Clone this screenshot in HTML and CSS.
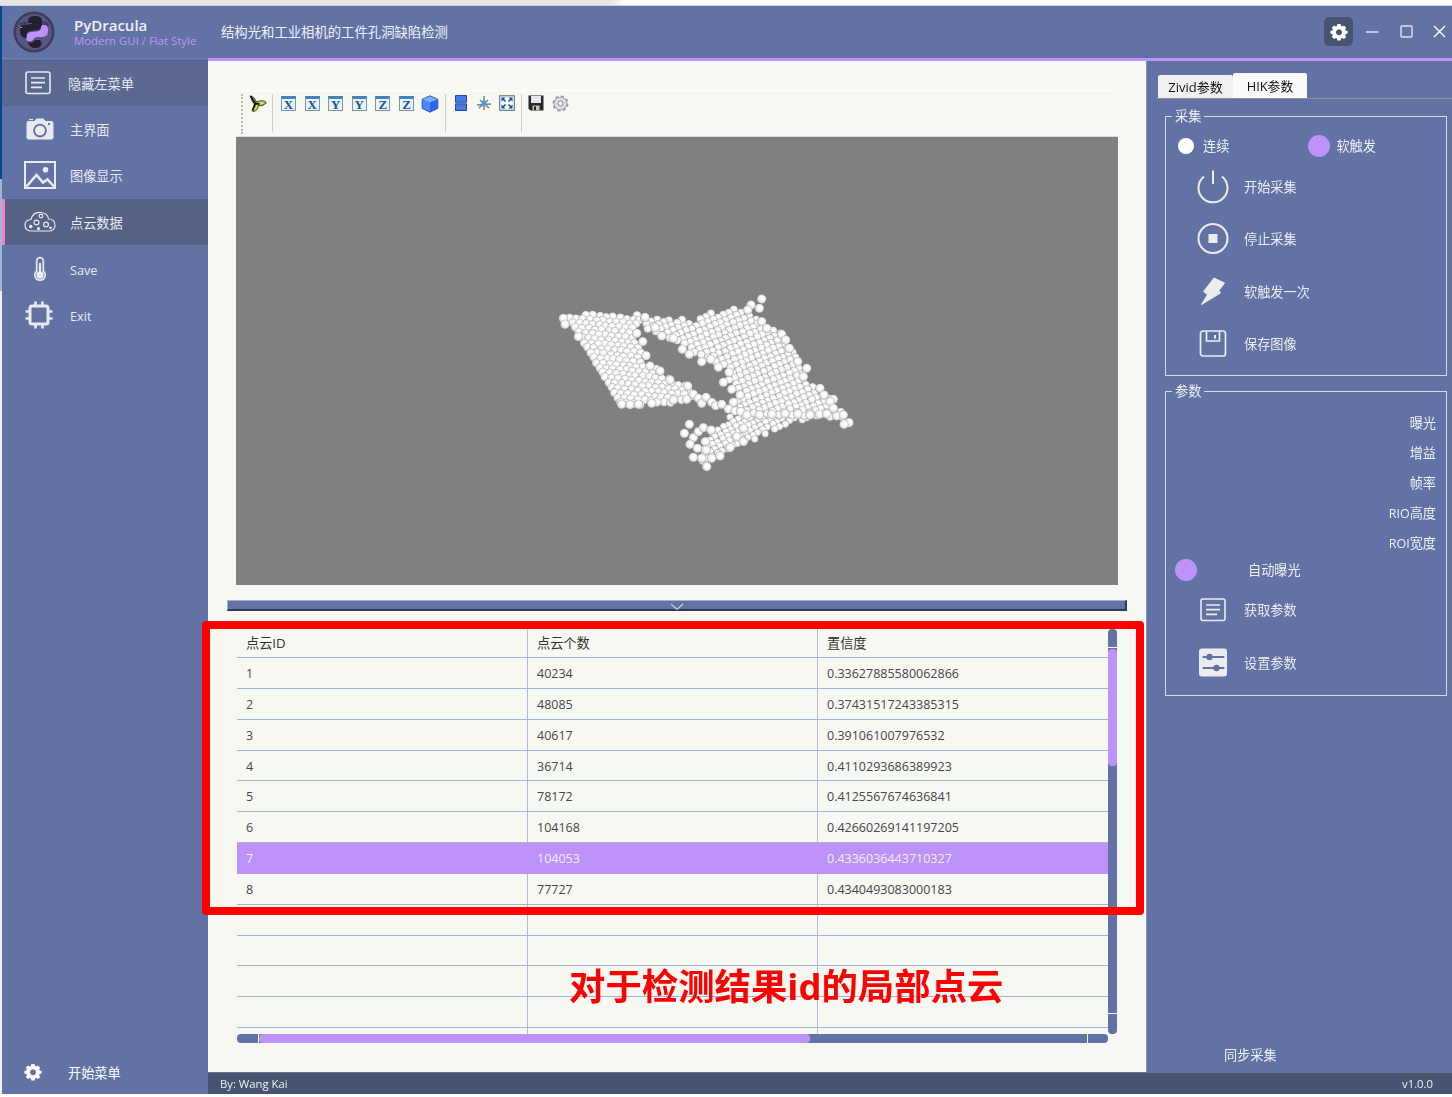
FILE: index.html
```html
<!DOCTYPE html>
<html lang="zh-CN">
<head>
<meta charset="utf-8">
<title>PyDracula</title>
<link rel="stylesheet" href="styles.css">
</head>
<body>
<svg class="defs" aria-hidden="true">
  <symbol id="list" viewBox="0 0 26 24"><rect x="1" y="1" width="24" height="21.5" rx="2" fill="none" stroke="currentColor" stroke-width="1.6"/><path d="M6 7h14M6 11.7h14M6 16.4h11" stroke="currentColor" stroke-width="1.7"/></symbol>
  <symbol id="gear" viewBox="0 0 18 18"><path fill="currentColor" fill-rule="evenodd" d="M7.4 1.1h3.2l.5 2 1 .5 1.9-1.1 2.2 2.2-1.1 1.9.5 1 2 .5v2.3l-2 .5-.5 1.1 1.1 1.9-2.2 2.2-1.9-1.1-1 .5-.5 2H7.4l-.5-2-1-.5L4 16.1l-2.200-2.200 1.100-1.900-.5-1.100-2-.5V8.100l2-.5.5-1L1.800 4.700 4 2.500l1.900 1.100 1-.5zM9 6.200a3 3 0 1 0 .01 0z"/></symbol>
</svg>
<div class="desktop-strip"></div>
<div class="window">
  <header class="titlebar">
    <div class="brand">
      <svg class="logo" viewBox="0 0 42 42"><circle cx="21" cy="21" r="20.500" fill="#3e3b5e"/><circle cx="21" cy="21" r="18" fill="#5a5580"/><path d="M5 13l6-3 4 2-5 3zM28 10l6 1 3 3-6 1z" fill="#454063"/><path d="M15 10q0-5 7-5t7 5v5q0 3-4 4l-8 1q-4 1-4 7-6 0-6-7-1-6 4-6l8-1v-1h-4z" fill="#212230"/><path d="M28 16q0-2 3-2 4 0 4 5 0 6-5 7h-5q-4 0-5 3-2 2-5 1-3-1-1-3v-2q0-4 5-4l5-.5q4-.5 4-4.500z" fill="#bd93f9"/><path d="M15 31q5 2 7-2h5l2 3q-1 5-7 5t-7-6z" fill="#212230"/><path d="M7 16.500h2M34 24h1" stroke="#ff79c6"/></svg>
      <div class="brand-text"><b>PyDracula</b><span>Modern GUI / Flat Style</span></div>
    </div>
    <div class="title">结构光和工业相机的工件孔洞缺陷检测</div>
    <div class="controls">
      <span class="settings"><svg width="18" height="18"><use href="#gear"/></svg></span>
      <svg width="13" height="14" viewBox="0 0 13 14"><path d="M0 7h12.500" stroke="#dfe3ee" stroke-width="1.500"/></svg>
      <svg width="13" height="13" viewBox="0 0 13 13"><rect x="1" y="1" width="11" height="11" rx="1" fill="none" stroke="#dfe3ee" stroke-width="1.400"/></svg>
      <svg width="13" height="13" viewBox="0 0 13 13"><path d="M1 1l11 11M12 1L1 12" stroke="#fff" stroke-width="1.400"/></svg>
    </div>
  </header>
  <div class="body">
    <nav class="sidebar">
      <div class="item toggle"><span class="ico"><svg width="26" height="24"><use href="#list"/></svg></span>隐藏左菜单</div>
      <div class="item"><span class="ico"><svg width="28" height="22" viewBox="0 0 28 22"><path fill="currentColor" fill-rule="evenodd" d="M2.500 3h6l2-2.500h7l2 2.500H25q2.500 0 2.500 2.500v13.500q0 2.500-2.500 2.500H3Q.5 21.500.5 19V5.500Q.5 3 2.500 3zM14 5.800a6.800 6.800 0 1 0 .01 0zM22 5v2h2V5zM14 7.500a5 5 0 1 1-.01 0z"/><path d="M3 1.500h4" stroke="currentColor"/></svg></span>主界面</div>
      <div class="item"><span class="ico"><svg width="32" height="28" viewBox="0 0 32 28"><rect x="1" y="1" width="30" height="26" fill="none" stroke="currentColor" stroke-width="2"/><circle cx="21.500" cy="8.800" r="2.800" fill="currentColor"/><path d="M2.500 25.500l10-11.500 6.500 7.500 4.500-3 6.500 7" fill="none" stroke="currentColor" stroke-width="2.500"/></svg></span>图像显示</div>
      <div class="item active"><span class="ico"><svg width="32" height="22" viewBox="0 0 32 22" fill="none" stroke="currentColor" stroke-width="1.200"><path d="M7 20q-6-.5-6-6 0-5 6-5.500Q9 1 16.500 1.500 24 2 24.500 8q6.500 0 6.500 6.500-.5 5.500-6 5.500z"/><circle cx="12.500" cy="11.500" r="2.400"/><circle cx="22" cy="13.500" r="2.400"/><circle cx="17" cy="5" r="1.800"/><g fill="currentColor"><circle cx="6.800" cy="15.500" r="1.200"/><circle cx="14.500" cy="17.500" r="1"/><circle cx="26.500" cy="16.800" r=".8"/></g></svg></span>点云数据</div>
      <div class="item"><span class="ico"><svg width="14" height="26" viewBox="0 0 14 26"><path d="M3.700 15V5a3.300 3.300 0 0 1 6.600 0v10a5.200 5.200 0 1 1-6.600 0z" fill="none" stroke="currentColor" stroke-width="1.700"/><circle cx="7" cy="19" r="3.700" fill="currentColor"/><path d="M7 7v12" stroke="currentColor" stroke-width="2.200"/></svg></span>Save</div>
      <div class="item"><span class="ico chip"><svg width="28" height="28" viewBox="0 0 28 28" fill="none" stroke="currentColor"><rect x="5" y="5" width="18" height="18" rx="2" stroke-width="3"/><path stroke-width="2.600" d="M10.500 5V.5M17.500 5V.5M10.500 27.500V23M17.500 27.500V23M5 10.500H.5M5 17.500H.5M27.500 10.500H23M27.500 17.500H23"/></svg></span>Exit</div>
      <div class="item start"><span class="ico"><svg width="18" height="18"><use href="#gear"/></svg></span>开始菜单</div>
    </nav>
    <div class="right-area">
      <div class="work">
        <main class="content">
          <div class="toolbar">
            <i class="grip"></i>
            <svg class="view" width="18" height="18" viewBox="0 0 18 18"><path d="M1.500 1q4 1 6 6 5-2 8.500-.5l1 1.500q-3 3-7.500 2.500-1 5-5 6l-1-1 2-6.500Q2.500 6 1.500 1z" fill="#d7dc62" stroke="#4b6a35" stroke-width="1.200"/><path d="M1.500 1l5 7.500-3 7M6.500 8.500l4 .5" fill="none" stroke="#111" stroke-width="1.800"/></svg>
            <i class="sep"></i>
            <span class="axis">X</span><span class="axis">X</span><span class="axis">Y</span><span class="axis">Y</span><span class="axis">Z</span><span class="axis">Z</span>
            <svg class="cube" width="18" height="18" viewBox="0 0 18 18"><path d="M9 .8l7.800 3.500v9L9 17.200 1.200 13.300v-9z" fill="#4c87ff" stroke="#2950a8"/><path d="M1.500 4.500L9 7.500l7.500-3L9 1.200z" fill="#7aacff"/><path d="M9 7.500l7.500-3V13L9 16.800z" fill="#2f65ee"/></svg>
            <i class="sep two"></i>
            <svg class="split" width="12" height="16" viewBox="0 0 12 16"><path d="M.5.500h11v6.700H.5zM.5 8.800h11v6.700H.5z" fill="#4778e8" stroke="#2549a6"/></svg>
            <svg class="star" width="16" height="16" viewBox="0 0 16 16"><path d="M8 1v14M1 10l14-1M3 13l9-8M4 5l9 8" stroke="#777f86" stroke-width="1.500"/><circle cx="8" cy="8" r="2.500" fill="#3e9cf2"/></svg>
            <svg class="fit" width="16" height="16" viewBox="0 0 16 16"><rect x=".7" y=".7" width="14.600" height="14.600" fill="#eef7ff" stroke="#52657c"/><path d="M.5.700h15" stroke="#a89158"/><path d="M2.500 6.500v-4h4zM9.500 2.500h4v4zM2.500 9.500v4h4zM13.500 9.500v4h-4z" fill="#164e91"/><path d="M4 4l2.500 2.500M12 4L9.500 6.500M4 12l2.500-2.500M12 12L9.500 9.500" stroke="#164e91" stroke-width="1.500"/></svg>
            <i class="sep three"></i>
            <svg class="disk" width="16" height="16" viewBox="0 0 16 16"><path d="M.5.500h15v15h-13l-2-2z" fill="#26282b"/><path d="M3 1h10v7H3z" fill="#e4e9ed"/><path d="M4.500 10.500h7V15h-7z" fill="#c1c3c4"/><path d="M6 11.500h2V15H6z" fill="#222"/></svg>
            <svg class="cog" width="17" height="17" viewBox="0 0 17 17"><circle cx="8.500" cy="8.500" r="7" fill="none" stroke="#9b9ba5" stroke-width="2" stroke-dasharray="3.200 2.300"/><circle cx="8.500" cy="8.500" r="6.300" fill="#dedee4" stroke="#a5a5ae"/><circle cx="8.500" cy="8.500" r="2.500" fill="#f8f8f2" stroke="#85858e"/></svg>
          </div>
          <canvas id="cloud" width="882" height="448"></canvas>
          <div class="splitter"><svg width="14" height="8" viewBox="0 0 14 8"><path d="M1 1l6 5.500L13 1" fill="none" stroke="#c3c9dc" stroke-width="1.200"/></svg></div>
          <div class="table-area">
            <div class="table-row">
              <div class="table">
                <div class="tr th"><span>点云ID</span><span>点云个数</span><span>置信度</span></div>
                <div class="tr"><span>1</span><span>40234</span><span>0.33627885580062866</span></div>
                <div class="tr"><span>2</span><span>48085</span><span>0.37431517243385315</span></div>
                <div class="tr"><span>3</span><span>40617</span><span>0.391061007976532</span></div>
                <div class="tr"><span>4</span><span>36714</span><span>0.4110293686389923</span></div>
                <div class="tr"><span>5</span><span>78172</span><span>0.4125567674636841</span></div>
                <div class="tr"><span>6</span><span>104168</span><span>0.42660269141197205</span></div>
                <div class="tr selected"><span>7</span><span>104053</span><span>0.4336036443710327</span></div>
                <div class="tr"><span>8</span><span>77727</span><span>0.4340493083000183</span></div>
                <div class="tr"><span></span><span></span><span></span></div>
                <div class="tr"><span></span><span></span><span></span></div>
                <div class="tr"><span></span><span></span><span></span></div>
                <div class="tr"><span></span><span></span><span></span></div>
                <div class="tr rest"><span></span><span></span><span></span></div>
              </div>
              <div class="vscroll"><i class="cap"></i><div class="track"><b></b></div><i class="cap"></i></div>
            </div>
            <div class="hscroll"><i class="cap"></i><div class="track"><b></b></div><i class="cap"></i></div>
          </div>
        </main>
        <aside class="panel">
          <div class="tabs"><span class="tab">Zivid参数</span><span class="tab on">HIK参数</span></div>
          <fieldset class="capture"><legend>采集</legend>
            <div class="radios"><i class="dot white"></i><span>连续</span><i class="dot"></i><span>软触发</span></div>
            <div class="act"><svg width="34" height="34" viewBox="0 0 34 34" fill="none" stroke="currentColor" stroke-width="2"><path d="M8 6.500a14.500 14.500 0 1 0 18 0M17 .5v13.500"/></svg>开始采集</div>
            <div class="act"><svg width="34" height="34" viewBox="0 0 34 34"><circle cx="17" cy="16.500" r="14.500" fill="none" stroke="currentColor" stroke-width="2"/><path d="M12.500 12h9v9h-9z" fill="currentColor"/></svg>停止采集</div>
            <div class="act"><svg width="34" height="34" viewBox="0 0 34 34"><path d="M18 3l10.500 5-5.500 7.500 1.500 2.500L5.500 29.500 11.500 19.500 7.500 16.500z" fill="currentColor" stroke="currentColor" stroke-linejoin="round"/></svg>软触发一次</div>
            <div class="act"><svg width="34" height="34" viewBox="0 0 34 34" fill="none" stroke="currentColor" stroke-width="1.700"><rect x="4.500" y="4" width="25" height="25" rx="2.500"/><path d="M10.500 4.500v9.500h13V4.500"/><path d="M19 8v3.500" stroke-width="2"/></svg>保存图像</div>
          </fieldset>
          <fieldset class="params"><legend>参数</legend>
            <div class="labels"><span>曝光</span><span>增益</span><span>帧率</span><span><em>RIO</em>高度</span><span><em>ROI</em>宽度</span></div>
            <div class="auto"><i class="dot"></i>自动曝光</div>
            <div class="act"><svg class="small" width="26" height="24"><use href="#list"/></svg>获取参数</div>
            <div class="act"><svg width="34" height="34" viewBox="0 0 34 34"><rect x="3" y="2.500" width="28" height="28" rx="3" fill="currentColor"/><g stroke="#6272a4" stroke-width="2.200" stroke-linecap="round"><path d="M7.500 11h20M7.500 22h20"/></g><circle cx="13.500" cy="11" r="3.200" fill="#6272a4"/><circle cx="20.500" cy="22" r="3.200" fill="#6272a4"/></svg>设置参数</div>
          </fieldset>
          <div class="sync">同步采集</div>
        </aside>
      </div>
      <footer><span>By: Wang Kai</span><span>v1.0.0</span></footer>
    </div>
  </div>
</div>
<div class="mark-box"></div>
<div class="mark-text">对于检测结果id的局部点云</div>
<script src="cloud.js"></script>
</body>
</html>
```
FILE: styles.css
```css
* { box-sizing: border-box; }
html, body { margin: 0; height: 100%; }
body { position: relative; overflow: hidden; background: #fdfdfd; color: #f0f1f5; font: 13.2px/18px "Open Sans", "Noto Sans CJK SC", sans-serif; padding-bottom: 3px; display: flex; flex-direction: column; }
svg { display: block; flex: none; }
i { display: block; flex: none; }
.defs { display: none; }
.desktop-strip { height: 6px; flex: none; background: linear-gradient(100deg, #e5e5e5 42%, #fcfcfc 43%); border-bottom: 1px solid #cdd0da; }
.window { flex: 1; min-height: 0; display: flex; flex-direction: column; border-left: 2px solid; border-image: linear-gradient(#08478d 0 173px, #9cb8d8 173px 285px, #edf0f6 285px) 0 0 0 2; background: #6272a4; }

.titlebar { height: 52px; flex: none; display: flex; align-items: center; }
.brand { width: 206px; display: flex; padding-left: 11px; }
.logo { width: 42px; height: 42px; }
.brand-text { padding: 5px 0 0 19px; display: flex; flex-direction: column; white-space: nowrap; }
.brand-text b { font-size: 15px; line-height: 18px; font-weight: 600; }
.brand-text span { font-size: 11.4px; line-height: 13px; color: #bd93f9; }
.title { flex: 1; padding-left: 13px; font-size: 13.35px; }
.controls { display: flex; align-items: center; color: #fff; padding: 0 6px 1px 0; gap: 20.500px; }
.settings { width: 29px; height: 29px; border-radius: 5px; background: #485371; display: grid; place-items: center; margin-right: -7.500px; }

.body { flex: 1; min-height: 0; display: flex; }
.sidebar { width: 206px; flex: none; display: flex; flex-direction: column; padding-top: 1px; border-top: 1px solid #6a7fbd; color: #e9eaf0; }
.item { height: 46.300px; display: flex; align-items: center; padding-top: 1px; }
.item .ico { width: 68px; padding-left: 8px; display: grid; place-items: center; flex: none; margin-top: -2px; }
.item .chip { padding-left: 6px; }
.item:nth-child(5), .item:nth-child(6) { font-size: 12.700px; padding-top: 3px; }
.toggle { background: #5b6892; }
.toggle .ico { width: 66px; padding-left: 6px; }
.active { background: #556286; box-shadow: inset 3px 0 #ff79c6; }
.start { margin-top: auto; height: 44px; color: #fff; }
.start .ico { width: 66px; padding: 0 4px 0 0; }

.right-area { flex: 1; min-width: 0; display: flex; flex-direction: column; border-top: 3px solid #bd93f9; }
.work { flex: 1; min-height: 0; display: flex; }
.content { width: 938px; background: #f8f8f2; padding: 29px 19px 0; display: flex; flex-direction: column; }
.toolbar { height: 47px; margin: 0 10px; border-top: 1px solid #fff; border-bottom: 1px solid #d8d8d4; display: flex; padding: 3px 0 0 4px; }
.toolbar > svg { margin-top: 1px; }
.grip { width: 3px; height: 40px; border-left: 2px dotted #b9b9b5; }
.view { margin-left: 5px; }
.sep { width: 1px; height: 38px; background: #cfcfcc; margin: 0 8px 0 5px; }
.axis { width: 15px; height: 15px; margin: 2px 8.600px 0 0; border: 1px solid #7f93a5; border-top: 3px solid #4382bc; background: #e6f4fd; color: #24528c; font: bold 13px/11px "Liberation Serif", serif; text-align: center; flex: none; }
.cube { margin-left: -2px; }
.sep.two { margin: 0 9px 0 6px; }
.star { margin-left: 9.500px; }
.fit { margin-left: 7px; }
.sep.three { margin: 0 6px; }
.cog { margin-left: 8px; }
#cloud { width: 882px; height: 448px; margin-left: 9px; flex: none; display: block; background: #808080; }
.splitter { height: 11px; flex: none; margin-top: 15px; background: #6272a4; border: 1px solid #a6b2d2; border-right: 2px solid #343b55; border-bottom: 2px solid #343b55; display: flex; justify-content: center; padding-top: 2px; }
.table-area { margin: 16px 10px 0; display: flex; flex-direction: column; }
.table-row { display: flex; height: 407px; padding-top: 2px; }
.table { width: 871px; height: 407px; margin-top: -2px; display: flex; flex-direction: column; overflow: hidden; color: #44464c; font-size: 12.500px; }
.tr { height: 30.850px; flex: none; display: grid; grid-template-columns: 291px 290px 290px; border-bottom: 1px solid #a4b1da; }
.tr span { padding: 7px 9px 0; border-right: 1px solid #b0bcdf; }
.tr span:last-child { border-right: 0; }
.th { height: 31px; color: #333; font-size: 13.200px; }
.selected { background: #bd93f9; border-color: #bd93f9; color: #f3ecff; }
.selected span { border-color: #bd93f9; }
.rest { height: 8px; border-bottom: 0; }
.vscroll { width: 9px; display: flex; flex-direction: column; gap: 1px; }
.vscroll .cap { height: 18px; background: #6272a4; border-radius: 4px 4px 0 0; }
.vscroll .cap:last-child { height: 20px; border-radius: 0 0 4px 4px; }
.vscroll .track { flex: 1; background: #6272a4; }
.vscroll b { display: block; margin-top: 1px; height: 117px; border-radius: 4px; background: #bd93f9; }
.hscroll { width: 871px; height: 9px; display: flex; gap: 1px; }
.hscroll .cap { width: 21px; background: #6272a4; border-radius: 4px 0 0 4px; }
.hscroll .cap:last-child { width: 20px; border-radius: 0 4px 4px 0; }
.hscroll .track { flex: 1; background: #6272a4; }
.hscroll b { display: block; width: 551px; height: 9px; background: #bd93f9; border-radius: 4px; }

.panel { flex: 1; min-width: 0; display: flex; flex-direction: column; padding-top: 12px; border-left: 1px solid #8390b8; }
.tabs { display: flex; align-items: flex-end; margin-left: 9px; padding-left: 2px; height: 26px; border-bottom: 1px solid #8b8d98; }
.tab { width: 75px; height: 23px; background: #f0f0f0; color: #111; text-align: center; line-height: 24px; font-size: 13px; border-radius: 2px 2px 0 0; }
.tab.on { width: 74px; height: 25px; background: #fafafa; line-height: 26px; font-size: 12.800px; }
fieldset { margin: 9px 5px 0 18px; min-width: 0; padding: 0; border: 1px solid #d7dae4; }
legend { margin-left: 6px; padding: 0 3px; line-height: 17px; height: 17px; }
.capture { height: 268px; }
.radios { display: flex; align-items: center; height: 22px; margin-top: 10px; padding-left: 9px; }
.dot { width: 22px; height: 22px; border-radius: 50%; background: #bd93f9; margin-right: 7px; }
.dot.white { width: 16px; height: 16px; background: #fff; margin: 0 9px 0 3px; }
.radios span + .dot { margin-left: 79px; margin-right: 6px; }
.act { height: 34px; margin: 0 0 18.300px 30px; display: flex; align-items: center; gap: 14px; color: #ececef; }
.radios + .act { margin-top: 13px; }
.act .small { margin: 0 4px; }
.params { height: 313px; margin-top: 7px; }
.labels { display: flex; flex-direction: column; align-items: flex-end; padding: 14px 10px 0 0; }
.labels span { height: 29.900px; }
.labels em { font-style: normal; font-size: 12.500px; }
.auto { display: flex; align-items: center; margin: -4px 0 0 9px; gap: 44px; height: 22px; }
.params .auto + .act { margin-top: 12px; }
.sync { margin: auto 0 8px 77px; }
footer { height: 22px; flex: none; background: #485371; border-top: 1px solid #68728a; display: flex; justify-content: space-between; padding: 1px 19px 0 12px; font-size: 11.300px; line-height: 19px; }

.mark-box { position: absolute; left: 202px; top: 621px; width: 942px; height: 294px; border: 8px solid #f00; border-radius: 4px; }
.mark-text { position: absolute; left: 569px; top: 962px; color: #f00; font: bold 36.400px/48px "Open Sans", "Noto Sans CJK SC", sans-serif; white-space: nowrap; }
```
FILE: cloud.js
```js
// Point sheets, in thirds of a pixel from the sheet origin.
const SCALE = 3, OX = 314, OY = 148;
const ctx = document.getElementById('cloud').getContext('2d');

let seed = 7;
function rnd() { seed = (seed * 16807) % 2147483647; return seed / 2147483647 - 0.5; }

function inside(x, y, p) {
  let hit = false;
  for (let i = 0, j = p.length - 1; i < p.length; j = i++) {
    const [xi, yi] = p[i], [xj, yj] = p[j];
    if ((yi > y) !== (yj > y) && x < (xj - xi) * (y - yi) / (yj - yi) + xi) hit = !hit;
  }
  return hit;
}

function ball(x, y, r) {
  const px = OX + x / SCALE, py = OY + y / SCALE;
  const g = ctx.createRadialGradient(px + r * 0.15, py - r * 0.2, r * 0.15, px, py, r);
  g.addColorStop(0, '#fff');
  g.addColorStop(0.5, '#f6f6f6');
  g.addColorStop(0.82, '#dadada');
  g.addColorStop(1, '#a2a2a2');
  ctx.fillStyle = g;
  ctx.beginPath();
  ctx.arc(px, py, r, 0, 7);
  ctx.fill();
}

// Lattice spanned by vectors u and v, clipped to the outline.
function sheet(outline, u, v, r) {
  const pts = [];
  for (let a = -80; a < 80; a++) for (let b = -80; b < 80; b++) {
    const x = 450 + a * u[0] + b * v[0] + rnd() * 4;
    const y = 250 + a * u[1] + b * v[1] + rnd() * 4;
    if (inside(x, y, outline)) pts.push([x, y]);
  }
  pts.sort((p, q) => p[1] - q[1]).forEach(p => ball(p[0], p[1], r));
}

sheet([[535,395],[620,385],[800,388],[770,405],[690,425],[620,460],[560,490],[470,535],[440,520],[475,450],[520,425]], [15,-8], [7,14], 3.7);
sheet([[35,92],[95,88],[265,90],[290,100],[255,125],[250,165],[275,185],[275,235],[300,240],[335,258],[365,288],[415,295],[440,335],[410,345],[380,352],[305,362],[212,362],[170,315],[140,260],[115,190],[80,150]], [20,2], [9,15], 4.4);
sheet([[280,95],[405,100],[425,112],[480,82],[580,66],[605,70],[625,105],[700,145],[745,230],[765,290],[850,345],[895,405],[780,395],[560,385],[540,350],[565,325],[535,285],[530,250],[480,230],[440,210],[380,175],[320,145],[270,135]], [16,-7], [6,16], 4.1);

[[40,100],[45,118],[85,155],[285,97],[315,128],[260,145],[278,170],[288,212],[300,243],[330,258],[360,285],[413,303],
 [335,153],[370,160],[397,193],[418,208],[455,230],[482,223],[505,247],[537,262],[520,292],[545,313],[570,330],[550,352],
 [410,343],[430,328],[445,340],[455,355],[468,337],[485,352],[497,362],[515,358],[535,372],[555,378],[572,380],[590,390],[628,390],[665,388],[705,386],[743,387],[780,390],[808,388],[830,387],[860,393],[880,390],[897,413],[882,418],
 [635,42],[628,70],[603,60],[593,75],[635,110],[650,130],[695,148],[707,165],[718,190],[743,230],[770,250],[760,275],[810,310],[822,330],[850,343],[840,350],[850,370],
 [215,358],[240,359],[265,358],[305,355],[370,345],[418,418],[403,445],[430,458],[445,440],[460,428],[483,435],[420,478],[442,490],[430,517],[455,520],[485,520],[510,513],[540,488],[470,545],[466,470],[468,495],[580,430],[560,455],[580,470]
].forEach(p => ball(p[0], p[1], 4.7));
```
